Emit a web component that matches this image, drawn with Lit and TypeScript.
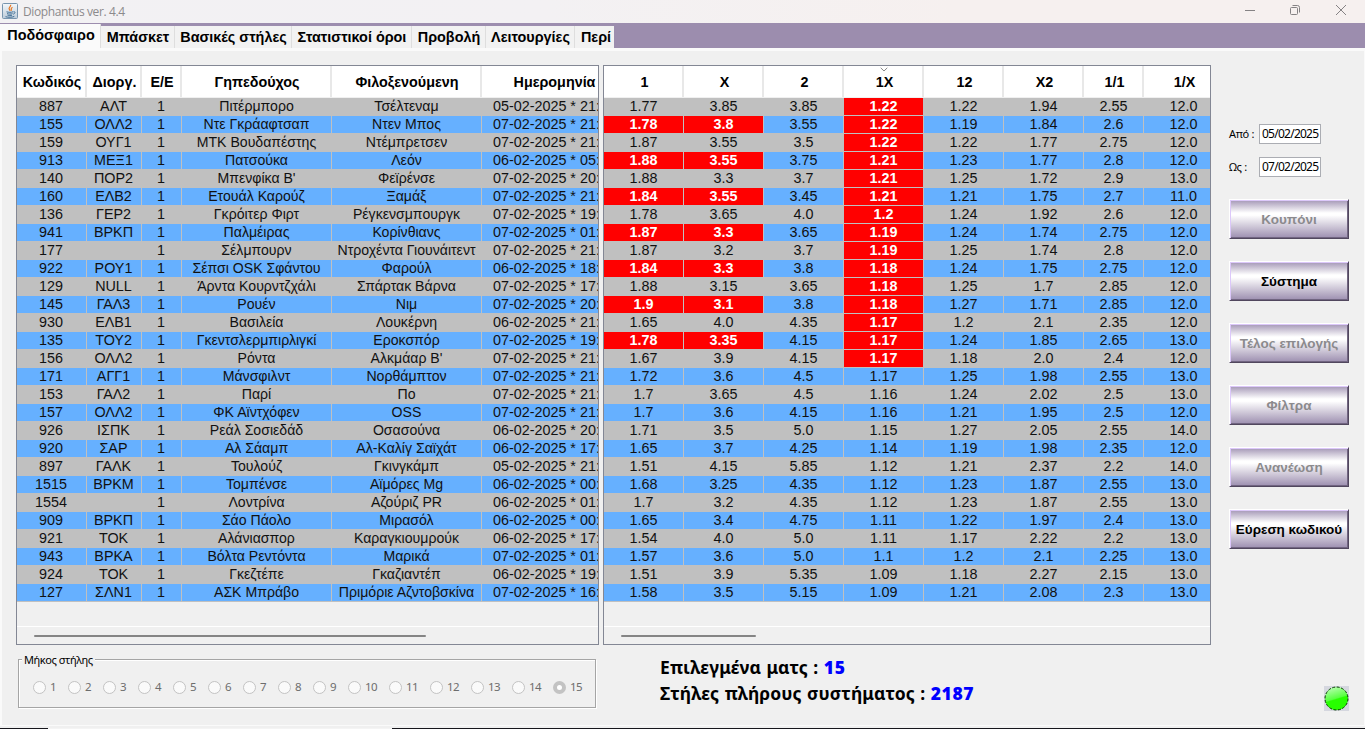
import { LitElement, html, css } from "lit";
import { customElement, property } from "lit/decorators.js";
import { classMap } from "lit/directives/class-map.js";

const MATCHES = `887|ΑΛΤ|1|Πιτέρμπορο|Τσέλτεναμ|05-02-2025 * 21:|1.77|3.85|3.85|1.22|1.22|1.94|2.55|12.0
155|ΟΛΛ2|1|Ντε Γκράαφτσαπ|Ντεν Μπος|07-02-2025 * 21:|1.78|3.8|3.55|1.22|1.19|1.84|2.6|12.0
159|ΟΥΓ1|1|ΜΤΚ Βουδαπέστης|Ντέμπρετσεν|07-02-2025 * 21:|1.87|3.55|3.5|1.22|1.22|1.77|2.75|12.0
913|ΜΕΞ1|1|Πατσούκα|Λεόν|06-02-2025 * 05:|1.88|3.55|3.75|1.21|1.23|1.77|2.8|12.0
140|ΠΟΡ2|1|Μπενφίκα Β'|Φεϊρένσε|07-02-2025 * 20:|1.88|3.3|3.7|1.21|1.25|1.72|2.9|13.0
160|ΕΛΒ2|1|Ετουάλ Καρούζ|Ξαμάξ|07-02-2025 * 21:|1.84|3.55|3.45|1.21|1.21|1.75|2.7|11.0
136|ΓΕΡ2|1|Γκρόιτερ Φιρτ|Ρέγκενσμπουργκ|07-02-2025 * 19:|1.78|3.65|4.0|1.2|1.24|1.92|2.6|12.0
941|ΒΡΚΠ|1|Παλμέιρας|Κορίνθιανς|07-02-2025 * 01:|1.87|3.3|3.65|1.19|1.24|1.74|2.75|12.0
177||1|Σέλμπουρν|Ντροχέντα Γιουνάιτεντ|07-02-2025 * 21:|1.87|3.2|3.7|1.19|1.25|1.74|2.8|12.0
922|ΡΟΥ1|1|Σέπσι OSK Σφάντου|Φαρούλ|06-02-2025 * 18:|1.84|3.3|3.8|1.18|1.24|1.75|2.75|12.0
129|NULL|1|Άρντα Κουρντζχάλι|Σπάρτακ Βάρνα|07-02-2025 * 17:|1.88|3.15|3.65|1.18|1.25|1.7|2.85|12.0
145|ΓΑΛ3|1|Ρουέν|Νιμ|07-02-2025 * 20:|1.9|3.1|3.8|1.18|1.27|1.71|2.85|12.0
930|ΕΛΒ1|1|Βασιλεία|Λουκέρνη|06-02-2025 * 21:|1.65|4.0|4.35|1.17|1.2|2.1|2.35|12.0
135|ΤΟΥ2|1|Γκεντσλερμπιρλιγκί|Εροκσπόρ|07-02-2025 * 19:|1.78|3.35|4.15|1.17|1.24|1.85|2.65|13.0
156|ΟΛΛ2|1|Ρόντα|Αλκμάαρ Β'|07-02-2025 * 21:|1.67|3.9|4.15|1.17|1.18|2.0|2.4|12.0
171|ΑΓΓ1|1|Μάνσφιλντ|Νορθάμπτον|07-02-2025 * 21:|1.72|3.6|4.5|1.17|1.25|1.98|2.55|13.0
153|ΓΑΛ2|1|Παρί|Πο|07-02-2025 * 21:|1.7|3.65|4.5|1.16|1.24|2.02|2.5|13.0
157|ΟΛΛ2|1|ΦΚ Αϊντχόφεν|OSS|07-02-2025 * 21:|1.7|3.6|4.15|1.16|1.21|1.95|2.5|12.0
926|ΙΣΠΚ|1|Ρεάλ Σοσιεδάδ|Οσασούνα|06-02-2025 * 20:|1.71|3.5|5.0|1.15|1.27|2.05|2.55|14.0
920|ΣΑΡ|1|Αλ Σάαμπ|Αλ-Καλίγ Σαϊχάτ|06-02-2025 * 17:|1.65|3.7|4.25|1.14|1.19|1.98|2.35|12.0
897|ΓΑΛΚ|1|Τουλούζ|Γκινγκάμπ|05-02-2025 * 21:|1.51|4.15|5.85|1.12|1.21|2.37|2.2|14.0
1515|ΒΡΚΜ|1|Τομπένσε|Αϊμόρες Mg|06-02-2025 * 00:|1.68|3.25|4.35|1.12|1.23|1.87|2.55|13.0
1554||1|Λοντρίνα|Αζούριζ PR|06-02-2025 * 01:|1.7|3.2|4.35|1.12|1.23|1.87|2.55|13.0
909|ΒΡΚΠ|1|Σάο Πάολο|Μιρασόλ|06-02-2025 * 00:|1.65|3.4|4.75|1.11|1.22|1.97|2.4|13.0
921|ΤΟΚ|1|Αλάνιασπορ|Καραγκιουμρούκ|06-02-2025 * 17:|1.54|4.0|5.0|1.11|1.17|2.22|2.2|13.0
943|ΒΡΚΑ|1|Βόλτα Ρεντόντα|Μαρικά|07-02-2025 * 01:|1.57|3.6|5.0|1.1|1.2|2.1|2.25|13.0
924|ΤΟΚ|1|Γκεζτέπε|Γκαζιαντέπ|06-02-2025 * 19:|1.51|3.9|5.35|1.09|1.18|2.27|2.15|13.0
127|ΣΛΝ1|1|ΑΣΚ Μπράβο|Πριμόριε Αζντοβσκίνα|07-02-2025 * 16:|1.58|3.5|5.15|1.09|1.21|2.08|2.3|13.0`
  .split("\n")
  .map((line) => line.split("|"));

/** Rows where the "1" and "X" odds are picked as well as "1X". */
const DOUBLE_PICKS = new Set(["155", "913", "160", "941", "922", "145", "135"]);
const PICKED_ROWS = 15;

@customElement("match-table")
class MatchTable extends LitElement {
  @property({ attribute: false }) heads: string[] = [];
  @property({ attribute: false }) rows: string[][] = [];
  @property() kind = "info";

  static styles = css`
    :host { display: flex; flex-direction: column; box-sizing: border-box; height: 580px; border: 1px solid #838794; overflow: hidden; background: #f0f0f0; }
    .line { display: grid; width: max-content; flex: none; }
    .info { grid-template-columns: 70px 55px 40px 150px 150px 145px; }
    .odds { grid-template-columns: repeat(6, 80px) 60px 80px; }
    .head { height: 32px; background: #fff; font: bold 14.35px/32px "Liberation Sans", sans-serif; box-shadow: inset 0 -1px #f0f0f0; }
    .head span { text-align: center; border-right: 2px solid #e8e8e8; box-sizing: border-box; height: 31px; position: relative; white-space: nowrap; padding-left: 2px; }
    .odds.head span { padding-left: 3px; }
    .sort { position: absolute; left: 36px; top: 1px; }
    .row { height: 18px; background: #c0c0c0; font: 14.35px/17px "Liberation Sans", sans-serif; color: #111; }
    .row.blue { background: #66b0ff; }
    .cell { box-sizing: border-box; height: 18px; border-right: 1px solid #c0c0c0; border-bottom: 1px solid #c0c0c0; text-align: center; white-space: pre; }
    .info .cell { padding-right: 1px; }
    .info .cell:last-child { text-align: left; padding-left: 11px; }
    .info .cell:nth-child(4), .info .cell:nth-child(5) { font-size: 14.1px; padding-right: 0; }
    .pick { background: #f00; color: #fff; font-weight: bold; }
    .scroll { margin-top: auto; height: 17px; flex: none; border-top: 1px solid #fff; display: flex; align-items: center; }
    .thumb { height: 2px; background: #858585; margin-left: 17px; border-radius: 1px; }
    .info.thumb { width: 392px; }
    .odds.thumb { width: 135px; }
  `;

  private picked(row: string[], i: number, col: number) {
    if (this.kind !== "odds") return false;
    return (col === 3 && i < PICKED_ROWS) || (col < 2 && DOUBLE_PICKS.has(MATCHES[i][0]));
  }

  render() {
    return html`
      <div class="line head ${this.kind}">
        ${this.heads.map((h) => html`<span>${h}${h === "1X"
          ? html`<svg class="sort" width="8" height="5" viewBox="0 0 8 5"><path d="M.7.8 4 4 7.3.8" fill="none" stroke="#888" /></svg>`
          : ""}</span>`)}
      </div>
      ${this.rows.map((row, i) => html`
        <div class=${classMap({ line: true, row: true, blue: i % 2 === 1, [this.kind]: true })}>
          ${row.map((v, c) => html`<div class=${classMap({ cell: true, pick: this.picked(row, i, c) })}>${v}</div>`)}
        </div>`)}
      <div class="scroll"><div class="thumb ${this.kind}"></div></div>`;
  }
}

@customElement("app-root")
class AppRoot extends LitElement {
  static styles = css`
    :host { display: flex; flex-direction: column; width: 1365px; height: 729px; background: #f0f0f0; overflow: hidden; color: #000; font-family: "Noto Sans", sans-serif; }
    .title { height: 23px; flex: none; display: flex; background: linear-gradient(90deg, #f2f1f3, #f3f1f3 40%, #f6f0ef 70%); }
    .java { margin: 3px 0 0 2px; flex: none; }
    .name { margin-left: 5px; font: 12px/24px "Open Sans", sans-serif; color: #8c8a8c; flex: 1; letter-spacing: -0.38px; }
    .win { margin-right: 18px; }
    .tabs { height: 25px; flex: none; background: #9c8dae; display: flex; align-items: flex-end; }
    .tab { box-sizing: border-box; height: 22px; background: #f2f2f2; border-right: 1px solid #dedede; text-align: center; font: bold 14.4px/22px "Liberation Sans", sans-serif; white-space: nowrap; padding-left: 1px; }
    .tab.on { height: 24px; background: #fafafa; line-height: 23px; padding-left: 2px; }
    .t0 { width: 101px; } .t1 { width: 74px; } .t2 { width: 117px; } .t3 { width: 120px; } .t4 { width: 74px; } .t5 { width: 89px; } .tab.t6 { width: 39px; border: 0; padding-left: 3px; }
    .page { flex: 1; box-sizing: border-box; border: solid #fafafa; border-width: 3px 1px 1px 2px; display: flex; flex-direction: column; padding: 14px 0 0 14px; }
    .top { display: flex; height: 580px; }
    .left { width: 583px; margin-right: 4px; }
    .right { width: 608px; }
    .side { margin-left: 18px; padding-top: 59px; width: 122px; font-size: 11px; }
    .date { display: flex; align-items: center; height: 20px; margin-bottom: 13px; }
    .date label { width: 30px; letter-spacing: -0.3px; padding-bottom: 2px; }
    .date input { box-sizing: border-box; width: 62px; height: 20px; margin: 0; padding: 0 0 2px 2px; border: 1px solid #abadb3; background: #fff; font: 12px "Noto Sans", sans-serif; letter-spacing: -0.75px; }
    .btns { display: flex; flex-direction: column; gap: 22px; padding-top: 9px; }
    .btn { box-sizing: border-box; width: 120px; height: 40px; border: 1px solid; border-color: #fff #51475e #51475e #fff; box-shadow: inset 1px 1px #dcc8fa, inset -1px -1px #716581; background: linear-gradient(#a396b5 0%, #fff 34%, #fff 40%, #a396b5 96%); font: bold 13.5px "Liberation Sans", sans-serif; padding: 0; color: #000; white-space: nowrap; }
    .btn:disabled { color: #8b8a8d; }
    .bottom { display: flex; }
    .group { box-sizing: border-box; margin: 14px 0 0 2px; width: 578px; height: 49px; border: 1px solid #a5a5a5; box-shadow: 1px 1px #fff, inset 1px 1px #fff; position: relative; }
    .legend { position: absolute; left: 3px; top: -8px; font-size: 11px; line-height: 16px; background: #f0f0f0; padding: 0 2px; letter-spacing: -0.45px; }
    .radios { display: flex; padding: 20px 0 0 14px; }
    .radio { width: 35px; display: flex; align-items: center; gap: 4px; font: 11.5px/14px "Noto Sans", sans-serif; color: #6d6d6d; }
    .radio.wide { width: 41px; letter-spacing: -0.5px; }
    .dot { box-sizing: border-box; width: 13px; height: 13px; border: 1px solid #c3c3c3; border-radius: 50%; background: #fafafa; flex: none; }
    .dot.on { border: 4px solid #c3c3c3; background: #fff; }
    .stats { margin: 9px 0 0 64px; font: bold 17.5px/26px "Noto Sans", sans-serif; letter-spacing: 0.1px; word-spacing: 0.8px; flex: 1; white-space: nowrap; }
    .stats b { color: #00f; letter-spacing: 0.6px; }
    .lamp { margin: 41px 15px 0 0; width: 25px; height: 25px; background: #d5d7df; flex: none; }
    .foot { height: 3px; flex: none; background: linear-gradient(90deg, #16161c 48px, #f4f4f4 48px 392px, #16161c 392px) bottom / 100% 1px no-repeat #f0f0f0; }
    svg { display: block; }
  `;

  private tabs = ["Ποδόσφαιρο", "Μπάσκετ", "Βασικές στήλες", "Στατιστικοί όροι", "Προβολή", "Λειτουργίες", "Περί"];
  private buttons: [string, boolean][] = [["Κουπόνι", false], ["Σύστημα", true], ["Τέλος επιλογής", false], ["Φίλτρα", false], ["Ανανέωση", false], ["Εύρεση κωδικού", true]];

  render() {
    return html`
      <div class="title">
        <svg class="java" width="16" height="16" viewBox="0 0 16 16">
          <defs><linearGradient id="jv" x2="0" y2="1"><stop stop-color="#f4f8fb" /><stop offset="1" stop-color="#bccbd9" /></linearGradient></defs>
          <rect x=".5" y=".5" width="15" height="15" rx="1" fill="url(#jv)" stroke="#7895ae" />
          <path d="M8.6 1.8c1 1.7-2.7 2.5-1.3 4.4.4.6.7 1 .6 1.6M10.5 4.2C8.2 5.3 9.4 6 9.4 7.8" fill="none" stroke="#e87722" stroke-width="1.2" />
          <path d="M4.5 8.8c2 .7 5 .6 6.5 0M5 10.6c1.7.6 4 .6 5.5 0M5.5 12.2c1.5.5 3 .5 4.5 0M3.5 13.7c2.5.8 7 .7 8.8-.3M11.4 8.8c2.3-.5 2 1.7-.2 2.4" fill="none" stroke="#3f6d94" />
        </svg>
        <span class="name">Diophantus ver. 4.4</span>
        <svg class="win" width="103" height="22" viewBox="0 0 103 22" fill="none" stroke="#858284">
          <path d="M1 10.5h10" />
          <rect x="46.5" y="7.5" width="7" height="7" rx="1" />
          <path d="M48.5 5.5h5a2 2 0 0 1 2 2v5" />
          <path d="m92 5 10 10M102 5 92 15" />
        </svg>
      </div>
      <div class="tabs">${this.tabs.map((t, i) => html`<div class="tab t${i} ${i ? "" : "on"}">${t}</div>`)}</div>
      <div class="page">
        <div class="top">
          <match-table class="left" kind="info"
            .heads=${["Κωδικός", "Διοργ.", "Ε/Ε", "Γηπεδούχος", "Φιλοξενούμενη", "Ημερομηνία"]}
            .rows=${MATCHES.map((m) => m.slice(0, 6))}></match-table>
          <match-table class="right" kind="odds"
            .heads=${["1", "X", "2", "1X", "12", "X2", "1/1", "1/X"]}
            .rows=${MATCHES.map((m) => m.slice(6))}></match-table>
          <div class="side">
            <div class="date"><label>Από :</label><input .value=${"05/02/2025"} /></div>
            <div class="date"><label>Ως :</label><input .value=${"07/02/2025"} /></div>
            <div class="btns">${this.buttons.map(([b, on]) => html`<button class="btn" ?disabled=${!on}>${b}</button>`)}</div>
          </div>
        </div>
        <div class="bottom">
          <div class="group">
            <span class="legend">Μήκος στήλης</span>
            <div class="radios">
              ${Array.from({ length: 15 }, (_, i) => i + 1).map((n) => html`
                <span class="radio ${n > 9 ? "wide" : ""}"><i class="dot ${n === 15 ? "on" : ""}"></i>${n}</span>`)}
            </div>
          </div>
          <div class="stats">
            <div>Επιλεγμένα ματς : <b>15</b></div>
            <div>Στήλες πλήρους συστήματος : <b>2187</b></div>
          </div>
          <svg class="lamp" viewBox="0 0 25 25">
            <defs><linearGradient id="lg" x1=".3" y1="0" x2=".6" y2="1"><stop stop-color="#b8ffb0" /><stop offset=".5" stop-color="#58ff40" /><stop offset=".55" stop-color="#28ff00" /></linearGradient></defs>
            <circle cx="12.5" cy="12.5" r="11.5" fill="url(#lg)" stroke="#063a00" stroke-dasharray="3 1.5" />
          </svg>
        </div>
      </div>
      <div class="foot"></div>`;
  }
}
